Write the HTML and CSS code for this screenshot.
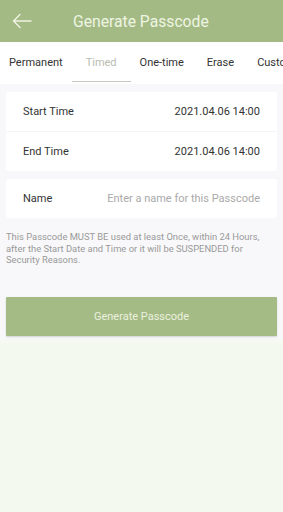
FILE: index.html
```html
<!DOCTYPE html>
<html lang="en">

<head>
    <meta charset="UTF-8">
    <meta name="viewport" content="width=device-width, initial-scale=1.0">
    <title>Generate Passcode</title>
    <link rel="stylesheet" href="styles.css">
</head>

<body>
    <header class="topbar">
        <svg class="back" viewBox="0 0 20 16" width="20" height="16">
            <path d="M19 8H2M8 1.5L1.5 8L8 14.5" fill="none" stroke="#eef4e4" stroke-width="1.4" stroke-linecap="round" stroke-linejoin="round" />
        </svg>
        <h1 class="title">Generate Passcode</h1>
    </header>

    <nav class="tabs">
        <span class="tab">Permanent</span>
        <span class="tab active">Timed</span>
        <span class="tab">One-time</span>
        <span class="tab">Erase</span>
        <span class="tab">Custom</span>
    </nav>

    <main class="content">
        <section class="card">
            <div class="row">
                <span class="label">Start Time</span>
                <span class="value">2021.04.06 14:00</span>
            </div>
            <div class="row">
                <span class="label">End Time</span>
                <span class="value">2021.04.06 14:00</span>
            </div>
        </section>

        <section class="card">
            <div class="row">
                <span class="label">Name</span>
                <span class="value placeholder">Enter a name for this Passcode</span>
            </div>
        </section>

        <p class="note">This Passcode MUST BE used at least Once, within 24 Hours, after the Start Date and Time or it will be SUSPENDED for Security Reasons.</p>

        <button class="generate">Generate Passcode</button>
    </main>
</body>

</html>
```

FILE: styles.css
```css
body {
    margin: 0;
    width: 283px;
    height: 512px;
    overflow: hidden;
    font-family: Roboto, "Liberation Sans", sans-serif;
    background: linear-gradient(#f8f8fa 0, #f8f8fa 336px, #f4f9ef 344px);
}

.topbar {
    height: 42px;
    background-color: #a4ba85;
    display: flex;
    align-items: center;
}

.back {
    margin-left: 12px;
}

.title {
    margin: 0 0 0 41px;
    font-size: 15.7px;
    font-weight: 400;
    color: #eef5e2;
}

.tabs {
    height: 42px;
    background-color: #fff;
    display: flex;
    align-items: center;
    white-space: nowrap;
    overflow: hidden;
    padding-left: 9px;
    font-size: 11px;
    color: #333;
}

.tab {
    margin-right: 23px;
    position: relative;
    line-height: 42px;
}

.tab.active {
    color: #b8bdb2;
}

.tab.active::after {
    content: "";
    position: absolute;
    left: -14px;
    right: -14px;
    bottom: 2px;
    height: 1.5px;
    background-color: #c6c8c4;
}

.content {
    padding: 8px 6px 0 6px;
}

.card {
    background-color: #fff;
    border-radius: 3px;
    margin-bottom: 8px;
}

.row {
    display: flex;
    justify-content: space-between;
    align-items: center;
    height: 39px;
    padding: 0 17px 0 17px;
    font-size: 11px;
    color: #333;
}

.card .row + .row {
    border-top: 1px solid #f4f4f6;
}

.value.placeholder {
    color: #aaa;
}

.note {
    margin: 13px 8px 0 0;
    font-size: 9.4px;
    line-height: 11.6px;
    color: #999;
}

.generate {
    display: block;
    width: 100%;
    height: 39px;
    margin-top: 31px;
    border: none;
    border-radius: 1px;
    background-color: #a5bb86;
    color: #eaf1de;
    font-family: inherit;
    font-size: 11px;
    box-shadow: 0 1px 2px rgba(0, 0, 0, 0.15);
}
```
